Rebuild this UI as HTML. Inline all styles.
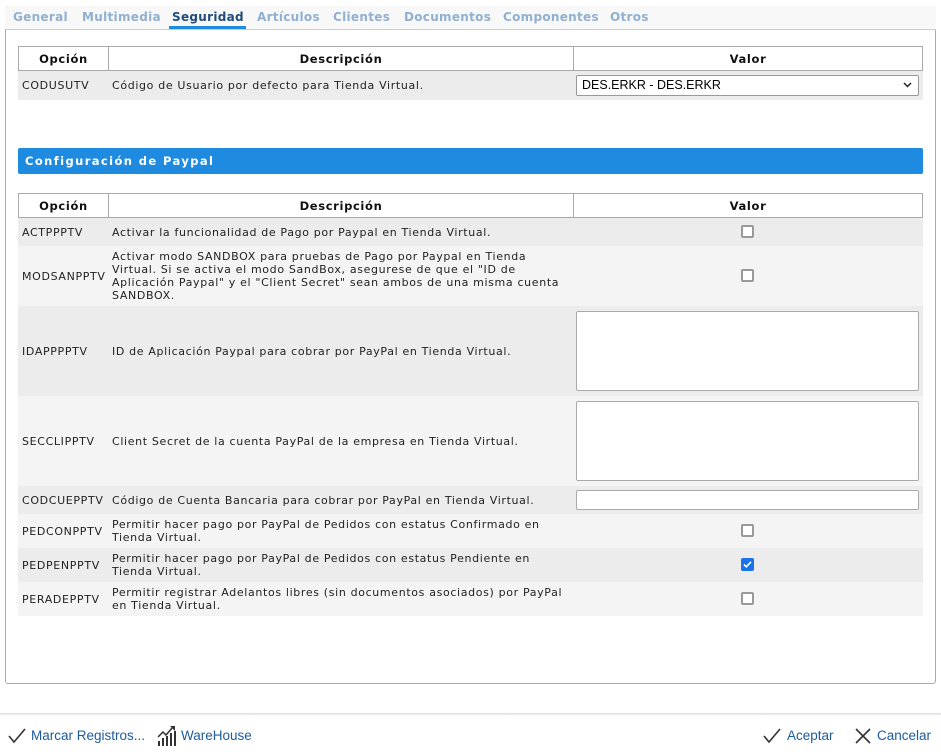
<!DOCTYPE html>
<html><head><meta charset="utf-8"><style>
*{box-sizing:border-box;margin:0;padding:0}
body{width:941px;height:756px;background:#fff;font-family:"DejaVu Sans","Liberation Sans",sans-serif;font-size:11px;color:#222;position:relative;overflow:hidden;letter-spacing:0.65px}
.panel{position:absolute;left:5px;top:6px;width:931px;height:678px;border:1px solid #aaa;border-radius:3px}
.tabs{position:absolute;left:5px;top:6px;width:931px;height:24px;border-bottom:1px solid #ccc;background:#f8f8f8;border-radius:3px 3px 0 0}
.tab{position:absolute;top:10px;font-weight:bold;font-size:12px;color:#8fb0d0;white-space:nowrap;letter-spacing:0.3px}
.tab.sel{color:#1e4b7c}
.ul{position:absolute;left:169px;top:26px;width:77px;height:3px;background:#1e8be0}
.hdr{position:absolute;left:18px;width:905px;height:25px;border:1px solid #aaa;background:#fff;font-weight:bold;font-size:11.5px;color:#111}
.hdr div{position:absolute;top:5px;text-align:center}
.row{position:absolute;left:18px;width:905px}
.row .c1{position:absolute;left:4px;white-space:nowrap}
.row .c2{position:absolute;left:94px;white-space:nowrap;line-height:13px}
.cb{position:absolute;left:723px;width:13px;height:13px;border:2px solid #999;border-radius:2px;background:#fff}
.ta{position:absolute;left:558px;width:343px;border:1px solid #aaa;border-radius:2px;background:#fff}
.blue{position:absolute;left:18px;top:148px;width:905px;height:26px;background:#1e8be0;border-radius:2px;color:#fff;font-weight:bold;font-size:11.5px;padding:6px 7px;letter-spacing:1.4px}
.foot{position:absolute;top:713px;left:0;width:941px;height:3px;background:linear-gradient(#ddd,#fff)}
.fl{position:absolute;top:728px;color:#1e5a9c;font-family:"Liberation Sans",sans-serif;font-size:13.5px;white-space:nowrap;letter-spacing:0}
</style></head><body>
<div class="panel"></div>
<div class="tabs"></div>
<div class="tab" style="left:13px">General</div>
<div class="tab" style="left:82px">Multimedia</div>
<div class="tab sel" style="left:172px">Seguridad</div>
<div class="tab" style="left:257px">Artículos</div>
<div class="tab" style="left:333px">Clientes</div>
<div class="tab" style="left:404px">Documentos</div>
<div class="tab" style="left:503px">Componentes</div>
<div class="tab" style="left:610px">Otros</div>
<div class="ul"></div>

<div class="hdr" style="top:46px"><div style="left:0;width:89px">Opción</div><div style="left:89px;width:465px;border-left:1px solid #aaa;height:23px;top:0;padding-top:5px">Descripción</div><div style="left:554px;width:349px;border-left:1px solid #aaa;height:23px;top:0;padding-top:5px">Valor</div></div>
<div class="row" style="top:71px;height:29px;background:#ececec"><div class="c1" style="top:8px">CODUSUTV</div><div class="c2" style="top:8px">Código de Usuario por defecto para Tienda Virtual.</div>
<div style="position:absolute;left:558px;top:4px;width:343px;height:21px;border:1px solid #999;border-radius:2px;background:#fff;font-family:'Liberation Sans',sans-serif;font-size:12.5px;padding:2px 5px;color:#000;letter-spacing:0">DES.ERKR - DES.ERKR<svg style="position:absolute;right:6px;top:6px" width="9" height="6" viewBox="0 0 9 6"><path d="M1 1l3.5 3.5L8 1" stroke="#222" stroke-width="1.5" fill="none"/></svg></div></div>

<div class="blue">Configuración de Paypal</div>

<div class="hdr" style="top:193px"><div style="left:0;width:89px">Opción</div><div style="left:89px;width:465px;border-left:1px solid #aaa;height:23px;top:0;padding-top:5px">Descripción</div><div style="left:554px;width:349px;border-left:1px solid #aaa;height:23px;top:0;padding-top:5px">Valor</div></div>

<div class="row" style="top:218px;height:28px;background:#ececec"><div class="c1" style="top:8px">ACTPPPTV</div><div class="c2" style="top:8px">Activar la funcionalidad de Pago por Paypal en Tienda Virtual.</div><div class="cb" style="top:7px"></div></div>
<div class="row" style="top:246px;height:60px;background:#f4f4f4"><div class="c1" style="top:24px">MODSANPPTV</div><div class="c2" style="top:4px">Activar modo SANDBOX para pruebas de Pago por Paypal en Tienda<br>Virtual. Si se activa el modo SandBox, asegurese de que el "ID de<br>Aplicación Paypal" y el "Client Secret" sean ambos de una misma cuenta<br>SANDBOX.</div><div class="cb" style="top:23px"></div></div>
<div class="row" style="top:306px;height:90px;background:#ececec"><div class="c1" style="top:39px">IDAPPPPTV</div><div class="c2" style="top:39px">ID de Aplicación Paypal para cobrar por PayPal en Tienda Virtual.</div><div class="ta" style="top:5px;height:80px"></div></div>
<div class="row" style="top:396px;height:90px;background:#f4f4f4"><div class="c1" style="top:39px">SECCLIPPTV</div><div class="c2" style="top:39px">Client Secret de la cuenta PayPal de la empresa en Tienda Virtual.</div><div class="ta" style="top:5px;height:80px"></div></div>
<div class="row" style="top:486px;height:28px;background:#ececec"><div class="c1" style="top:8px">CODCUEPPTV</div><div class="c2" style="top:8px">Código de Cuenta Bancaria para cobrar por PayPal en Tienda Virtual.</div><div class="ta" style="top:4px;height:20px"></div></div>
<div class="row" style="top:514px;height:34px;background:#f4f4f4"><div class="c1" style="top:11px">PEDCONPPTV</div><div class="c2" style="top:4px">Permitir hacer pago por PayPal de Pedidos con estatus Confirmado en<br>Tienda Virtual.</div><div class="cb" style="top:10px"></div></div>
<div class="row" style="top:548px;height:34px;background:#ececec"><div class="c1" style="top:11px">PEDPENPPTV</div><div class="c2" style="top:4px">Permitir hacer pago por PayPal de Pedidos con estatus Pendiente en<br>Tienda Virtual.</div><div class="cb" style="top:10px;background:#1a73e8;border-color:#1a73e8"><svg style="position:absolute;left:0;top:0" width="9" height="9" viewBox="0 0 9 9"><path d="M1 4.5l2.3 2.3L8 1.8" stroke="#fff" stroke-width="1.6" fill="none"/></svg></div></div>
<div class="row" style="top:582px;height:34px;background:#f4f4f4"><div class="c1" style="top:11px">PERADEPPTV</div><div class="c2" style="top:4px">Permitir registrar Adelantos libres (sin documentos asociados) por PayPal<br>en Tienda Virtual.</div><div class="cb" style="top:10px"></div></div>

<div class="foot"></div>
<svg style="position:absolute;left:8px;top:728px" width="18" height="16" viewBox="0 0 18 16"><path d="M1 8l5 6L17 1" stroke="#333" stroke-width="1.6" fill="none"/></svg>
<div class="fl" style="left:31px">Marcar Registros...</div>
<svg style="position:absolute;left:157px;top:725px" width="20" height="22" viewBox="0 0 20 22"><g fill="#333"><rect x="1" y="16" width="2" height="5"/><rect x="5" y="13" width="2" height="8"/><rect x="9" y="11" width="2" height="10"/><rect x="13" y="8" width="2" height="13"/><rect x="17" y="6" width="2" height="15"/></g><path d="M1 12l5-5 3 3 7-8" stroke="#333" stroke-width="1.5" fill="none"/><path d="M13 1h5v5z" fill="#333"/></svg>
<div class="fl" style="left:181px">WareHouse</div>
<svg style="position:absolute;left:763px;top:728px" width="18" height="16" viewBox="0 0 18 16"><path d="M1 8l5 6L17 1" stroke="#333" stroke-width="1.6" fill="none"/></svg>
<div class="fl" style="left:787px">Aceptar</div>
<svg style="position:absolute;left:854px;top:727px" width="18" height="18" viewBox="0 0 18 18"><path d="M2 2l14 14M16 2L2 16" stroke="#333" stroke-width="1.6"/></svg>
<div class="fl" style="left:877px">Cancelar</div>
</body></html>
